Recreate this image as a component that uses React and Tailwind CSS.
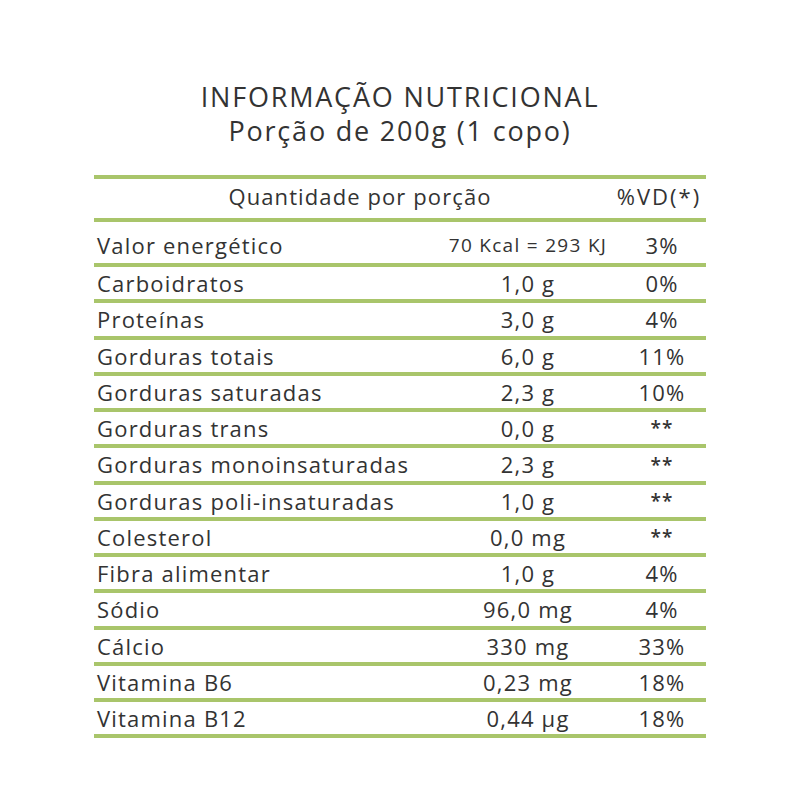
import React from 'react';

const rows = [
  ['Valor energético', '70 Kcal = 293 KJ', '3%'],
  ['Carboidratos', '1,0 g', '0%'],
  ['Proteínas', '3,0 g', '4%'],
  ['Gorduras totais', '6,0 g', '11%'],
  ['Gorduras saturadas', '2,3 g', '10%'],
  ['Gorduras trans', '0,0 g', '**'],
  ['Gorduras monoinsaturadas', '2,3 g', '**'],
  ['Gorduras poli-insaturadas', '1,0 g', '**'],
  ['Colesterol', '0,0 mg', '**'],
  ['Fibra alimentar', '1,0 g', '4%'],
  ['Sódio', '96,0 mg', '4%'],
  ['Cálcio', '330 mg', '33%'],
  ['Vitamina B6', '0,23 mg', '18%'],
  ['Vitamina B12', '0,44 µg', '18%'],
];

export default function App() {
  return (
    <div className="w-[800px] h-[800px] bg-white text-[#333333] font-['Open_Sans',sans-serif] pt-[80px]">
      {/* Title */}
      <div className="text-center text-[27px] leading-[34px] tracking-[1.8px]">
        <div>INFORMAÇÃO NUTRICIONAL</div>
        <div>Porção de 200g (1 copo)</div>
      </div>

      {/* Table */}
      <div className="w-[612px] mx-auto mt-[27px] border-t-4 border-[#a9c56b]">
        <div className="grid grid-cols-[1fr_92px] items-center h-[43px] border-b-4 border-[#a9c56b] text-[22px] tracking-[1.1px] pb-1">
          <div className="text-center pl-[12px]">Quantidade por porção</div>
          <div className="text-center pr-[2px] tracking-[2px]">%VD(*)</div>
        </div>

        {rows.map(([label, qty, vd], i) => (
          <div
            key={label}
            className={`grid grid-cols-[1fr_180px_88px] items-center border-b-4 border-[#a9c56b] text-[22px] tracking-[1.2px] ${
              i === 0 ? 'h-[45px] pt-[6px]' : 'h-[36.25px]'
            }`}
          >
            <div className="pl-[3px] whitespace-nowrap">{label}</div>
            <div className={`text-center whitespace-nowrap ${i === 0 ? 'text-[19px] tracking-[1.3px]' : ''}`}>{qty}</div>
            <div className={`text-center ${vd === '**' ? 'text-[19px] font-semibold' : ''}`}>{vd}</div>
          </div>
        ))}
      </div>
    </div>
  );
}
